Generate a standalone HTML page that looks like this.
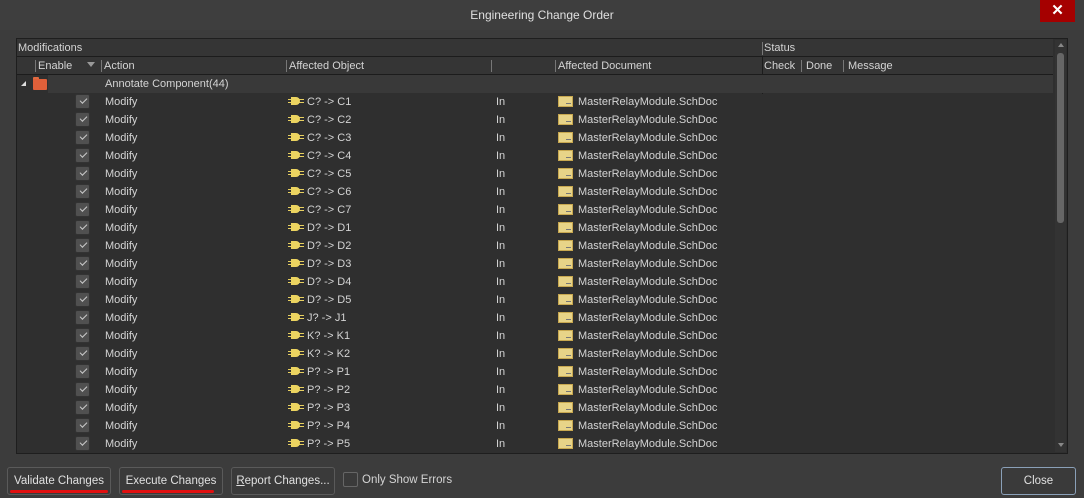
<!DOCTYPE html><html><head><style>
*{box-sizing:border-box;margin:0;padding:0}
body{width:1084px;height:498px;background:#3c3c3c;font-family:"Liberation Sans",sans-serif;font-size:11px;color:#d4d4d4;position:relative;overflow:hidden}
.a{position:absolute;white-space:nowrap}
.title{left:0;top:0;width:1084px;height:30px;background:#3e3e3e;text-align:center;line-height:30px;font-size:12px;color:#e0e0e0}
.x{left:1040px;top:0;width:35px;height:22px;background:#a50000;color:#fff;font-size:15px;font-weight:bold;text-align:center;line-height:22px}
.tbl{left:16px;top:38px;width:1052px;height:416px;background:#2f2f2f;border:1px solid #1e1e1e}
.hdr{background:#353535;border-bottom:1px solid #1c1c1c}
.sep{width:1px;height:12px;background:#777}
.cb{width:15px;height:15px;background:#505050;border-radius:2px;border:1px solid #333}
.cb:after{content:"";position:absolute;left:4px;top:3px;width:6px;height:3px;border-left:1px solid #ccc;border-bottom:1px solid #ccc;transform:rotate(-45deg)}
.btn{top:467px;height:28px;border:1px solid #5a5a5a;background:#3a3a3a;border-radius:3px;text-align:center;line-height:26px;font-size:11.5px;color:#e0e0e0}
.red{height:3px;background:#e01010;border-radius:2px;top:490px}
</style></head><body>
<div class="a title">Engineering Change Order</div>
<div class="a x">✕</div>
<div class="a tbl"></div>
<div class="a hdr" style="left:17px;top:39px;width:1036px;height:18px"></div>
<div class="a" style="left:18px;top:42px">Modifications</div>
<div class="a sep" style="left:762px;top:42px;height:13px"></div>
<div class="a" style="left:764px;top:42px">Status</div>
<div class="a hdr" style="left:17px;top:57px;width:1036px;height:18px"></div>
<div class="a sep" style="left:35px;top:60px"></div><div class="a" style="left:38px;top:60px">Enable</div>
<div class="a" style="left:87px;top:62px;width:0;height:0;border-left:4px solid transparent;border-right:4px solid transparent;border-top:5px solid #999"></div>
<div class="a sep" style="left:101px;top:60px"></div><div class="a" style="left:104px;top:60px">Action</div>
<div class="a sep" style="left:286px;top:60px"></div><div class="a" style="left:289px;top:60px">Affected Object</div>
<div class="a sep" style="left:491px;top:60px"></div>
<div class="a sep" style="left:555px;top:60px"></div><div class="a" style="left:558px;top:60px">Affected Document</div>
<div class="a" style="left:762px;top:57px;width:1px;height:37px;background:#1c1c1c"></div>
<div class="a" style="left:764px;top:60px">Check</div>
<div class="a sep" style="left:801px;top:60px"></div><div class="a" style="left:806px;top:60px">Done</div>
<div class="a sep" style="left:843px;top:60px"></div><div class="a" style="left:848px;top:60px">Message</div>
<div class="a" style="left:48px;top:75px;width:1005px;height:18px;background:#393939"></div>
<div class="a" style="left:21px;top:81px;width:0;height:0;border-left:5px solid transparent;border-bottom:5px solid #ddd"></div>
<div class="a" style="left:33px;top:77px;width:6px;height:3px;background:#e06a40;border-radius:1px 1px 0 0"></div>
<div class="a" style="left:33px;top:79px;width:14px;height:11px;background:#e0603a;border-radius:1px"></div>
<div class="a" style="left:105px;top:78px">Annotate Component(44)</div>
<div class="a" style="left:1055px;top:40px;width:11px;height:412px;background:#333"></div>
<div class="a" style="left:1057px;top:53px;width:7px;height:170px;background:#666;border-radius:3px"></div>
<div class="a" style="left:1058px;top:43px;width:0;height:0;border-left:3px solid transparent;border-right:3px solid transparent;border-bottom:4px solid #888"></div>
<div class="a" style="left:1058px;top:443px;width:0;height:0;border-left:3px solid transparent;border-right:3px solid transparent;border-top:4px solid #888"></div>
<div id="rows"></div>
<script>
var n=["C? -> C1","C? -> C2","C? -> C3","C? -> C4","C? -> C5","C? -> C6","C? -> C7","D? -> D1","D? -> D2","D? -> D3","D? -> D4","D? -> D5","J? -> J1","K? -> K1","K? -> K2","P? -> P1","P? -> P2","P? -> P3","P? -> P4","P? -> P5"],h="";
n.forEach(function(t,i){var y=93+i*18;
h+='<div class="a cb" style="left:75px;top:'+(y+1)+'px"></div>'+
'<div class="a" style="left:105px;top:'+(y+3)+'px">Modify</div>'+
'<div class="a" style="left:288px;top:'+(y+6)+'px;width:16px;height:1px;background:#e8d060"></div>'+
'<div class="a" style="left:288px;top:'+(y+9)+'px;width:16px;height:1px;background:#e8d060"></div>'+
'<div class="a" style="left:291px;top:'+(y+4)+'px;width:9px;height:8px;background:#ecd460;border-radius:0 4px 4px 0"></div>'+
'<div class="a" style="left:307px;top:'+(y+3)+'px">'+t+'</div>'+
'<div class="a" style="left:496px;top:'+(y+3)+'px">In</div>'+
'<div class="a" style="left:558px;top:'+(y+3)+'px;width:15px;height:11px;background:#e8d488;border:1px solid #c8a850"></div>'+
'<div class="a" style="left:566px;top:'+(y+10)+'px;width:5px;height:1px;background:#777"></div>'+
'<div class="a" style="left:578px;top:'+(y+3)+'px">MasterRelayModule.SchDoc</div>';});
document.getElementById("rows").innerHTML=h;
</script>
<div class="a btn" style="left:7px;width:104px">Validate Changes</div>
<div class="a btn" style="left:119px;width:104px">Execute Changes</div>
<div class="a btn" style="left:231px;width:104px"><u>R</u>eport Changes...</div>
<div class="a" style="left:343px;top:472px;width:15px;height:15px;border:1px solid #666;border-radius:2px;background:#3a3a3a"></div>
<div class="a" style="left:362px;top:474px;font-size:11.5px">Only Show Errors</div>
<div class="a btn" style="left:1001px;width:75px;border-color:#8aa0b8">Close</div>
<div class="a red" style="left:10px;width:98px"></div>
<div class="a red" style="left:122px;width:92px"></div>
</body></html>
